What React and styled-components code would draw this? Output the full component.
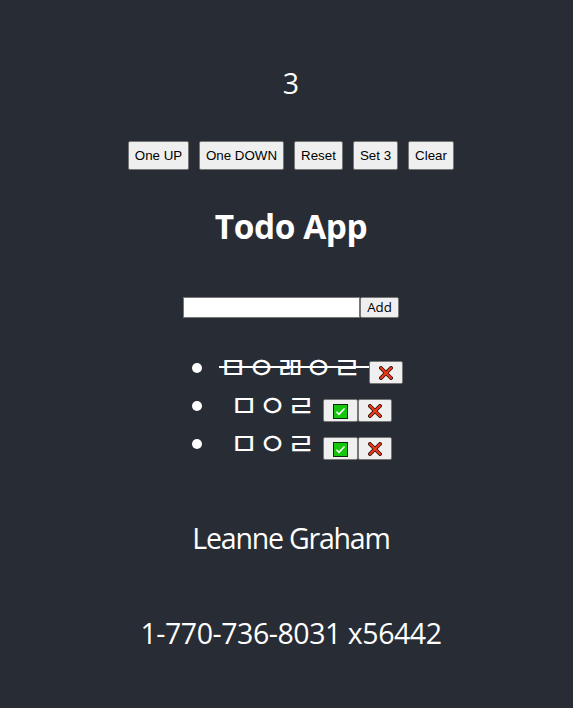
import React, { useState } from "react";
import styled, { createGlobalStyle } from "styled-components";

const GlobalStyle = createGlobalStyle`
  * { box-sizing: border-box; }
  body { margin: 0; background: #282c34; }
`;

const Page = styled.main`
  display: flex;
  flex-direction: column;
  align-items: center;
  height: 708px;
  padding: 64px 0 0 9px;
  overflow: hidden;
  background: #282c34;
  color: #fff;
  font-family: "Open Sans", "Noto Sans CJK KR", sans-serif;
  font-size: 28.5px;
`;

const Line = styled.p`
  height: 38px;
  margin: 0 0 ${(p) => p.$after || 0}px;
  line-height: 37px;
  letter-spacing: ${(p) => p.$spacing || 0}px;
  white-space: nowrap;
`;

const Counter = styled(Line)`
  line-height: 38px;
`;

const Toolbar = styled.div`
  display: flex;
  gap: 10px;
  margin-top: 39px;
`;

const Button = styled.button`
  width: ${(p) => p.$width}px;
  height: ${(p) => p.$height || 29}px;
  padding: 0;
  border: 1px solid #767676;
  border-radius: 2px;
  background: #efefef;
  color: #000;
  font: 13.333px ${(p) => (p.$humanist ? '"Open Sans"' : '"Liberation Sans"')}, sans-serif;
  line-height: 17px;
  white-space: nowrap;
`;

const Title = styled.h1`
  height: 46px;
  margin: 34px 0 47px;
  font-size: 33.4px;
  font-weight: 700;
  line-height: 44px;
  letter-spacing: -0.4px;
  white-space: nowrap;
`;

const Form = styled.form`
  display: flex;
`;

const Input = styled.input`
  width: 177px;
  height: 21px;
  padding: 1px 2px;
  border: 1px solid #767676;
  background: #fff;
`;

const List = styled.ul`
  width: 226px;
  margin: 31px 0 57px 14px;
  padding: 0;
  list-style: none;
`;

const Item = styled.li`
  display: flex;
  height: 38px;
`;

const Bullet = styled.span`
  flex: none;
  width: 10px;
  height: 10px;
  margin: 14px 0 0 7px;
  border-radius: 50%;
  background: #fff;
`;

const Content = styled.div`
  display: flex;
  flex: 1;
  justify-content: center;
  margin-left: 9px;
`;

const Jamo = styled.span`
  display: flex;
  height: 38px;
  padding-right: 8px;
  font-size: 31px;
  line-height: 37px;
  background: ${(p) =>
    p.$done ? "linear-gradient(#fff, #fff) 0 17px / 100% 2px no-repeat" : "none"};
`;

const Letter = styled.span`
  display: flex;
  justify-content: center;
  width: 28.5px;
`;

const Actions = styled.span`
  display: flex;
  margin-top: 12px;
`;

const IconButton = styled(Button)`
  display: flex;
  align-items: center;
  justify-content: center;
  padding-top: 1px;
`;

function Check() {
  return (
    <svg width="15" height="15" viewBox="0 0 15 15">
      <rect x="0.5" y="0.5" width="14" height="14" fill="#16c60c" stroke="#0c2b0a" />
      <path d="M3.5 7.7 6 10.3 11.5 4.5" fill="none" stroke="#fff" strokeWidth="1.5" />
    </svg>
  );
}

function Cross() {
  return (
    <svg width="14" height="14" viewBox="0 0 14 14">
      <path d="M2 2 12 12M12 2 2 12" stroke="#301410" strokeWidth="3.8" strokeLinecap="square" />
      <path d="M2 2 12 12M12 2 2 12" stroke="#f03a17" strokeWidth="2.1" strokeLinecap="square" />
    </svg>
  );
}

const todos = [
  { id: 1, text: "ㅁㅇㄻㅇㄹ", done: true },
  { id: 2, text: "ㅁㅇㄹ", done: false },
  { id: 3, text: "ㅁㅇㄹ", done: false },
];

export default function App() {
  const [count, setCount] = useState(3);
  return (
    <>
      <GlobalStyle />
      <Page>
        <Counter>{count}</Counter>
        <Toolbar>
          <Button $width={61} onClick={() => setCount(count + 1)}>One UP</Button>
          <Button $width={85} onClick={() => setCount(count - 1)}>One DOWN</Button>
          <Button $width={49} onClick={() => setCount(0)}>Reset</Button>
          <Button $width={45} onClick={() => setCount(3)}>Set 3</Button>
          <Button $width={46}>Clear</Button>
        </Toolbar>
        <Title>Todo App</Title>
        <Form onSubmit={(e) => e.preventDefault()}>
          <Input />
          <Button $width={39} $height={21} $humanist>Add</Button>
        </Form>
        <List>
          {todos.map((todo) => (
            <Item key={todo.id}>
              <Bullet />
              <Content>
                <Jamo $done={todo.done}>
                  {[...todo.text].map((letter, i) => (
                    <Letter key={i}>{letter}</Letter>
                  ))}
                </Jamo>
                <Actions>
                  {!todo.done && (
                    <IconButton $width={35} $height={23} aria-label="Done"><Check /></IconButton>
                  )}
                  <IconButton $width={34} $height={23} aria-label="Delete"><Cross /></IconButton>
                </Actions>
              </Content>
            </Item>
          ))}
        </List>
        <Line $after={57} $spacing={-1.2}>Leanne Graham</Line>
        <Line $spacing={-0.45}>1-770-736-8031 x56442</Line>
      </Page>
    </>
  );
}
